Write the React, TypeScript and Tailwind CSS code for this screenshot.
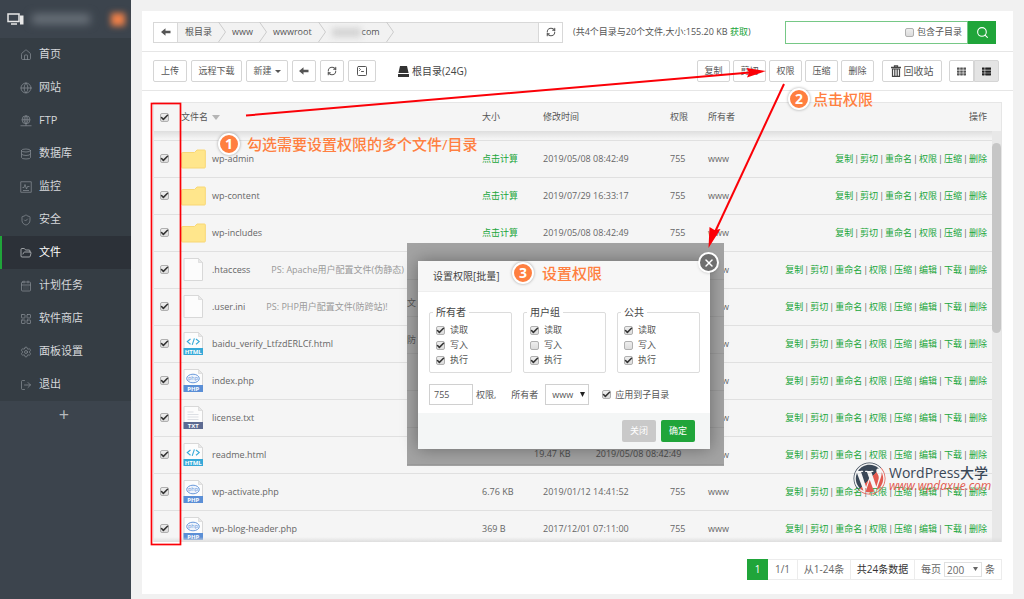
import React from 'react';
import {
    Home, Globe, Database, ShieldCheck, FolderOpen, CalendarDays,
    LayoutGrid, Settings, LogOut, Check, Search, X, RefreshCw, SquareTerminal,
} from 'lucide-react';
import { FaWordpress, FaTh, FaThList } from 'react-icons/fa';

type FileKind = 'folder' | 'blank' | 'html' | 'php' | 'txt';

interface FileRow {
    name: string;
    kind: FileKind;
    note?: string;
    size?: string;
    time?: string;
    mode?: string;
}

interface IconProps {
    size?: number;
    strokeWidth?: number;
    className?: string;
}

const FtpIcon: React.FC<IconProps> = ({ size = 12, strokeWidth = 1.5, className }) => (
    <svg width={size} height={size} viewBox="0 0 24 24" fill="none" stroke="currentColor" strokeWidth={strokeWidth} className={className}>
        <circle cx="12" cy="9.500" r="8" />
        <path d="M4 9.500h16M12 1.500v16M12 1.500c-5 4-5 12 0 16M12 1.500c5 4 5 12 0 16M1 21.500h22M12 17.500v4" />
    </svg>
);

const MonitorIcon: React.FC<IconProps> = ({ size = 12, strokeWidth = 1.5, className }) => (
    <svg width={size} height={size} viewBox="0 0 24 24" fill="none" stroke="currentColor" strokeWidth={strokeWidth} className={className}>
        <path d="M1.500 1.500h21v21h-21zM5 13h3l2-6 3 9 2-5h4M6 19h12" />
    </svg>
);

const ArrowIcon = () => (
    <svg width="10" height="8" viewBox="0 0 10 8" fill="currentColor">
        <path d="M0 4l4.500-3.800v2.600H9.500v2.400H4.500v2.600z" />
    </svg>
);

const TrashIcon = () => (
    <svg width="10" height="12" viewBox="0 0 10 12" fill="none" stroke="#444">
        <path d="M0 2.500h10M3.500 2.500V.8h3v1.700" strokeWidth="1.300" />
        <path d="M1.500 4h7v7.300h-7zM3.800 4.500v6.500M6.200 4.500v6.500" strokeWidth="1.200" />
    </svg>
);

const menu = [
    { label: '首页', icon: Home },
    { label: '网站', icon: Globe },
    { label: 'FTP', icon: FtpIcon },
    { label: '数据库', icon: Database },
    { label: '监控', icon: MonitorIcon },
    { label: '安全', icon: ShieldCheck },
    { label: '文件', icon: FolderOpen },
    { label: '计划任务', icon: CalendarDays },
    { label: '软件商店', icon: LayoutGrid },
    { label: '面板设置', icon: Settings },
    { label: '退出', icon: LogOut },
];

const files: FileRow[] = [
    { name: 'wp-admin', kind: 'folder', time: '2019/05/08 08:42:49', mode: '755' },
    { name: 'wp-content', kind: 'folder', time: '2019/07/29 16:33:17', mode: '755' },
    { name: 'wp-includes', kind: 'folder', time: '2019/05/08 08:42:49', mode: '755' },
    { name: '.htaccess', kind: 'blank', note: 'PS: Apache用户配置文件(伪静态)' },
    { name: '.user.ini', kind: 'blank', note: 'PS: PHP用户配置文件(防跨站)!' },
    { name: 'baidu_verify_LtfzdERLCf.html', kind: 'html' },
    { name: 'index.php', kind: 'php' },
    { name: 'license.txt', kind: 'txt' },
    { name: 'readme.html', kind: 'html' },
    { name: 'wp-activate.php', kind: 'php', size: '6.76 KB', time: '2019/01/12 14:41:52', mode: '755' },
    { name: 'wp-blog-header.php', kind: 'php', size: '369 B', time: '2017/12/01 07:11:00', mode: '755' },
];

const folderActions = ['复制', '剪切', '重命名', '权限', '压缩', '删除'];
const fileActions = ['复制', '剪切', '重命名', '权限', '压缩', '编辑', '下载', '删除'];

const permGroups = [
    { title: '所有者', checks: [true, true, true] },
    { title: '用户组', checks: [true, false, true] },
    { title: '公共', checks: [true, false, true] },
];

const toolButton = 'flex h-[22px] shrink-0 items-center justify-center rounded-[2px] border border-[#d5d5d5] bg-white text-[9px] text-[#555]';

const Tick: React.FC<{ checked?: boolean; label?: string }> = ({ checked = false, label }) => (
    <span className="relative inline-block h-[9px] w-[9px] shrink-0">
        <input
            type="checkbox"
            defaultChecked={checked}
            aria-label={label}
            className="peer absolute inset-0 m-0 h-[9px] w-[9px] appearance-none rounded-[2px] border border-[#b0b0b0] bg-linear-to-b from-[#eee] to-[#dcdcdc]"
        />
        <Check size={9} strokeWidth={4} className="pointer-events-none absolute inset-0 hidden text-[#333] peer-checked:block" />
    </span>
);

const FileIcon: React.FC<{ kind: FileKind }> = ({ kind }) => {
    if (kind === 'folder') {
        return (
            <svg width="25" height="20" viewBox="0 0 25 20">
                <path d="M1.500 3.500h12l2.500-2.500h7.500q.8 0 .8.8v16.400q0 .8-.8.8h-22q-.8 0-.8-.8v-14q0-.7.8-.7z" fill="#ffe68c" stroke="#f8d775" />
            </svg>
        );
    }
    const color = kind === 'html' ? '#36a9d8' : kind === 'php' ? '#5b8fd6' : '#5d6b92';
    return (
        <svg width="21" height="23" viewBox="0 0 21 23" className="ml-[2px]">
            <path d="M1 .5h14.500l4 4v18h-18.500z" fill="#fcfcfc" stroke="#d8d8d8" />
            <path d="M15.500.5v4h4z" fill="#e8e8e8" stroke="#d8d8d8" strokeWidth=".7" />
            {kind === 'html' && <path d="M7.500 7l-3.200 2.600 3.200 2.600M13 7l3.200 2.600L13 12.200M11.400 6.300L9.200 12.900" fill="none" stroke={color} strokeWidth="1.100" />}
            {kind === 'php' && (
                <>
                    <ellipse cx="10" cy="9.500" rx="6.300" ry="4.300" fill="#eef4fd" stroke={color} strokeWidth=".9" />
                    <text x="10" y="11.300" fontSize="5.500" textAnchor="middle" fill={color}>php</text>
                </>
            )}
            {kind === 'txt' && <path d="M4.500 6h6M4.500 8.500h11M4.500 11h11M4.500 13.500h11" stroke="#dcdfe4" />}
            {kind !== 'blank' && (
                <>
                    <rect x=".5" y="16" width="19.500" height="7" fill={color} />
                    <text x="10.200" y="21.700" fontSize="6" fontWeight="700" textAnchor="middle" fill="#fff">{kind.toUpperCase()}</text>
                </>
            )}
        </svg>
    );
};

const Chevron = () => (
    <svg width="8" height="20" viewBox="0 0 8 20" className="shrink-0">
        <path d="M.5 0l7 10L.5 20" fill="none" stroke="#ccc" />
    </svg>
);

const Caret = ({ className }: { className?: string }) => (
    <svg viewBox="0 0 6 5" preserveAspectRatio="none" className={className}>
        <path d="M0 0h6L3 5z" fill="currentColor" />
    </svg>
);

const StepBadge: React.FC<{ step: number }> = ({ step }) => (
    <span className="flex h-[22px] w-[22px] items-center justify-center rounded-full border-2 border-white bg-[#ff7f40] text-sm leading-none font-bold text-white shadow-[0_0_3px_rgba(0,0,0,0.35)]">
        {step}
    </span>
);

const Sidebar = () => (
    <aside className="w-[131px] shrink-0 bg-[#3c444d]">
        <div className="flex h-[38px] items-center overflow-hidden pl-[7px]">
            <svg width="17" height="12" viewBox="0 0 17 12" fill="none" stroke="#e8e8e8">
                <rect x="1" y="1" width="11" height="7.500" strokeWidth="1.500" />
                <path d="M4 11h6" strokeWidth="1.500" />
                <rect x="13.500" y="3" width="2.500" height="8" fill="#e8e8e8" />
            </svg>
            <span className="ml-[8px] h-[10px] w-[58px] bg-[#6a727a] blur-[4px]" />
            <span className="ml-[21px] h-[13px] w-[14px] bg-[#f08048] blur-[3px]" />
        </div>
        <nav className="bg-[#353d44]">
            {menu.map(({ label, icon: Icon }) => {
                const active = label === '文件';
                return (
                    <a
                        key={label}
                        href="#"
                        className={`flex h-[33px] items-center gap-[7px] border-l-2 pl-[18px] text-[11px] ${active ? 'border-[#20a53a] bg-[#2c3138] text-white' : 'border-transparent text-[#d5d8db]'}`}
                    >
                        <Icon size={12} strokeWidth={1.5} className={active ? 'text-[#c5c8cb]' : 'text-[#858c93]'} />
                        {label}
                    </a>
                );
            })}
        </nav>
        <button className="flex h-[26px] w-full items-center justify-center pr-[3px] text-lg leading-none text-[#b5b9bd]">+</button>
    </aside>
);

const PathBar = () => (
    <div className="flex h-[41px] items-center border-b border-[#e6e6e6] pt-[2px] pr-[17px] pl-[11px]">
        <div className="flex h-[21px] w-[410px] items-stretch border border-[#d8d8d8] bg-[#f2f2f2]">
            <button aria-label="返回" className="flex w-[24px] items-center justify-center border-r border-[#d8d8d8] bg-white text-[#555]">
                <ArrowIcon />
            </button>
            <div className="flex flex-1 items-center gap-[6px] pl-[7px] text-[9px] text-[#555]">
                <a href="#">根目录</a>
                <Chevron />
                <a href="#">www</a>
                <Chevron />
                <a href="#">wwwroot</a>
                <Chevron />
                <a href="#" className="flex items-center">
                    <span className="mr-px h-[9px] w-[29px] bg-[#d3d3d3] blur-[3px]" />
                    com
                </a>
                <Chevron />
            </div>
            <button aria-label="刷新" className="flex w-[24px] items-center justify-center border-l border-[#d8d8d8] bg-white text-[#555]">
                <RefreshCw size={10} strokeWidth={2.5} />
            </button>
        </div>
        <p className="ml-[10px] text-[9px] text-[#555]">
            (共4个目录与20个文件,大小:155.20 KB <a href="#" className="text-[#20a53a]">获取</a>)
        </p>
        <div className="ml-auto flex h-[23px] w-[211px]">
            <div className="flex min-w-0 flex-1 items-center border border-[#76c886] bg-white pr-[5px]">
                <input type="text" aria-label="搜索" className="min-w-0 flex-1 outline-none" />
                <label className="flex items-center gap-[3px] text-[9px] text-[#555]">
                    <Tick />
                    包含子目录
                </label>
            </div>
            <button aria-label="搜索文件" className="flex w-[28px] items-center justify-center bg-[#20a53a] text-white">
                <Search size={13} />
            </button>
        </div>
    </div>
);

const Toolbar = () => (
    <div className="flex h-[39px] items-center gap-[4px] border-b border-[#e6e6e6] pr-[14px] pl-[11px]">
        <button className={`${toolButton} w-[34px]`}>上传</button>
        <button className={`${toolButton} w-[51px]`}>远程下载</button>
        <button className={`${toolButton} w-[42px] gap-[3px]`}>
            新建
            <Caret className="h-[3px] w-[6px]" />
        </button>
        <button aria-label="后退" className={`${toolButton} w-[24px]`}><ArrowIcon /></button>
        <button aria-label="刷新列表" className={`${toolButton} w-[24px]`}><RefreshCw size={10} strokeWidth={2.5} /></button>
        <button aria-label="终端" className={`${toolButton} w-[28px]`}><SquareTerminal size={12} strokeWidth={2} /></button>
        <a href="#" className="ml-[18px] flex items-center gap-[3px] text-[10px] text-[#444]">
            <svg width="11" height="11" viewBox="0 0 11 11" fill="#333">
                <path d="M2 0h7l1.600 7H.4zM0 8h11v3H0z" />
            </svg>
            根目录(24G)
        </a>
        <div className="ml-auto flex gap-[3px]">
            {['复制', '剪切', '权限', '压缩', '删除'].map(t => (
                <button key={t} className={`${toolButton} w-[33px]`}>{t}</button>
            ))}
        </div>
        <button className={`${toolButton} ml-[4px] w-[60px] gap-[3px]`}>
            <TrashIcon />
            <span className="text-[10px]">回收站</span>
        </button>
        <div className="ml-[3px] flex">
            <button aria-label="图标视图" className={`${toolButton} w-[25px] rounded-r-none`}><FaTh size={9} /></button>
            <button aria-label="列表视图" className={`${toolButton} w-[25px] rounded-l-none bg-[#e4e4e4]! text-[#222]!`}><FaThList size={9} /></button>
        </div>
    </div>
);

const FileTable = () => (
    <div className="relative mt-[11px] mr-[11px] ml-[11px] h-[440px] overflow-hidden border-x border-t border-[#e6e6e6] bg-[#f5f5f5]">
        <table className="w-full table-fixed border-collapse text-left text-[9px] text-[#666]">
            <colgroup>
                <col className="w-[27px]" />
                <col />
                <col className="w-[61px]" />
                <col className="w-[127px]" />
                <col className="w-[38px]" />
                <col className="w-[60px]" />
                <col className="w-[233px]" />
            </colgroup>
            <thead>
                <tr className="h-[28px] text-[#555] [&>th]:p-0 [&>th]:font-normal">
                    <th><div className="flex pl-[6px]"><Tick checked label="全选" /></div></th>
                    <th>
                        <span className="flex items-center gap-[4px]">
                            文件名
                            <Caret className="h-[5px] w-[8px] text-[#b5b5b5]" />
                        </span>
                    </th>
                    <th>大小</th>
                    <th>修改时间</th>
                    <th>权限</th>
                    <th>所有者</th>
                    <th><div className="pr-[14px] text-right">操作</div></th>
                </tr>
            </thead>
            <tbody>
                <tr className="h-[9px]"><td colSpan={7} className="p-0" /></tr>
                {files.map(file => (
                    <tr key={file.name} className="h-[37px] border-t border-[#e0e0e0] [&>td]:p-0">
                        <td><div className="flex pl-[6px]"><Tick checked label={file.name} /></div></td>
                        <td>
                            <div className="flex items-center whitespace-nowrap">
                                <span className="w-[31px] shrink-0"><FileIcon kind={file.kind} /></span>
                                <a href="#">{file.name}</a>
                                {file.note && <span className="ml-[21px] text-[#999]">{file.note}</span>}
                            </div>
                        </td>
                        <td>{file.kind === 'folder' ? <a href="#" className="text-[#20a53a]">点击计算</a> : file.size}</td>
                        <td>{file.time}</td>
                        <td>{file.mode}</td>
                        <td>www</td>
                        <td>
                            <div className="flex justify-end gap-px pr-[14px] whitespace-nowrap">
                                {(file.kind === 'folder' ? folderActions : fileActions).map((action, i) => (
                                    <React.Fragment key={action}>
                                        {i > 0 && <span>|</span>}
                                        <a href="#" className="text-[#20a53a]">{action}</a>
                                    </React.Fragment>
                                ))}
                            </div>
                        </td>
                    </tr>
                ))}
            </tbody>
        </table>
        <div className="absolute inset-x-0 top-[28px] h-[8px] bg-linear-to-b from-[#dedede] to-transparent" />
        <div className="absolute top-[28px] right-0 bottom-0 w-[9px] bg-[#e8e8e8] pt-[12px]">
            <div className="h-[190px] rounded-full bg-[#c6c6c6]" />
        </div>
        <div className="absolute inset-x-0 bottom-0 h-[5px] bg-linear-to-t from-[#dedede] to-transparent" />
    </div>
);

const Pagination = () => (
    <div className="mt-[17px] mr-[11px] mb-[14px] flex justify-end text-[10px] text-[#666]">
        <div className="flex h-[21px] items-stretch border border-[#ececec] [&>*]:flex [&>*]:items-center">
            <span className="-my-px -ml-px w-[21px] justify-center bg-[#20a53a] text-white">1</span>
            <span className="w-[30px] justify-center border-r border-[#ececec]">1/1</span>
            <span className="w-[53px] justify-center border-r border-[#ececec]">从1-24条</span>
            <span className="w-[64px] justify-center border-r border-[#ececec] text-[#333]">共24条数据</span>
            <label className="gap-[3px] px-[6px]">
                每页
                <span className="relative flex">
                    <select className="h-[15px] w-[38px] appearance-none border border-[#e0e0e0] bg-white pl-[2px] text-[10px] leading-none" defaultValue="200">
                        <option>200</option>
                    </select>
                    <Caret className="pointer-events-none absolute top-[5px] right-[4px] h-[4px] w-[5px]" />
                </span>
                条
            </label>
        </div>
    </div>
);

const PermissionDialog = () => (
    <div className="absolute top-[243px] left-[407px] w-[317px] bg-[#a3a3a3] bg-[repeating-linear-gradient(to_bottom,transparent_0,transparent_36px,#999_36px,#999_37px)] text-[9px] text-[#555]">
        <div className="flex h-[206px] pt-[18px] pr-[14px]">
            <div className="w-[11px] shrink-0 overflow-hidden pt-[36px] leading-[12px]">
                <p>文</p>
                <p className="mt-[25px]">防</p>
            </div>
            <section role="dialog" aria-label="设置权限" className="relative flex flex-1 flex-col bg-white shadow-[0_0_16px_rgba(0,0,0,0.35)]">
                <header className="flex h-[31px] items-center border-b border-[#eee] bg-[#f7f7f7] pl-[15px] text-[10px] text-[#444]">
                    设置权限[批量]
                </header>
                <button aria-label="关闭窗口" className="absolute -top-[9px] -right-[9px] flex h-[21px] w-[21px] items-center justify-center rounded-full border-2 border-white bg-[#6f6f6f] text-white shadow-sm">
                    <X size={12} strokeWidth={3} />
                </button>
                <div className="flex gap-[11px] px-[11px] pt-[14px] pr-[10px]">
                    {permGroups.map(group => (
                        <fieldset key={group.title} className="h-[67px] min-w-0 flex-1 rounded-[2px] border border-[#dcdcdc] px-[6px]">
                            <legend className="-ml-[3px] px-[3px] text-[10px] leading-[12px] text-[#444]">{group.title}</legend>
                            <div className="flex flex-col gap-[3px] pt-[6px]">
                                {['读取', '写入', '执行'].map((name, i) => (
                                    <label key={name} className="flex h-[12px] items-center gap-[5px]">
                                        <Tick checked={group.checks[i]} />
                                        {name}
                                    </label>
                                ))}
                            </div>
                        </fieldset>
                    ))}
                </div>
                <div className="mt-[11px] flex h-[21px] items-center px-[11px]">
                    <input id="mode" type="text" defaultValue="755" className="h-[21px] w-[44px] border border-[#d0d0d0] pl-[4px] text-[9px]" />
                    <label htmlFor="mode" className="ml-[3px]">权限,</label>
                    <label htmlFor="owner" className="ml-[15px]">所有者</label>
                    <span className="relative ml-[7px] flex">
                        <select id="owner" className="h-[21px] w-[44px] appearance-none border border-[#d0d0d0] bg-white pl-[6px] text-[9px]" defaultValue="www">
                            <option>www</option>
                        </select>
                        <Caret className="pointer-events-none absolute top-[8px] right-[4px] h-[5px] w-[5px] text-[#222]" />
                    </span>
                    <label className="ml-[13px] flex items-center gap-[4px]">
                        <Tick checked />
                        应用到子目录
                    </label>
                </div>
                <footer className="mt-auto flex h-[36px] items-center justify-end gap-[5px] bg-[#f4f6f6] pr-[15px] text-[9px] text-white">
                    <button className="h-[22px] w-[34px] rounded-[2px] bg-[#c9c9c9]">关闭</button>
                    <button className="h-[22px] w-[34px] rounded-[2px] bg-[#20a53a]">确定</button>
                </footer>
            </section>
        </div>
        <div className="relative flex h-[17px] gap-[25px] pl-[127px] leading-[10px] text-[#444]">
            <span>19.47 KB</span>
            <span>2019/05/08 08:42:49</span>
        </div>
    </div>
);

const Annotations = () => (
    <div className="pointer-events-none absolute inset-0 text-[15px] leading-none font-medium text-[#ff7f40]">
        <svg width="1024" height="599" viewBox="0 0 1024 599" className="absolute top-0 left-0">
            <rect x="151.500" y="103.500" width="29" height="441" fill="none" stroke="#fb0007" strokeWidth="1.700" />
            <path d="M246 115.500L750 72.500" stroke="#fb0007" strokeWidth="2" />
            <path d="M766 71L747 77.500L749 72.500L746.500 68z" fill="#fb0007" />
            <path d="M784 84L715 232" stroke="#fb0007" strokeWidth="2" />
            <path d="M708.500 248L709.500 227L714.500 230L720.500 229z" fill="#fb0007" />
        </svg>
        <div className="absolute top-[133px] left-[218px] flex items-center gap-[7px]"><StepBadge step={1} />勾选需要设置权限的多个文件/目录</div>
        <div className="absolute top-[88px] left-[788px] flex items-center gap-[3px]"><StepBadge step={2} />点击权限</div>
        <div className="absolute top-[262px] left-[512px] flex items-center gap-[8px]"><StepBadge step={3} />设置权限</div>
        <div className="absolute top-[462px] left-[853px] flex items-center gap-[3px]">
            <svg width="33" height="33" viewBox="0 0 33 33">
                <defs>
                    <linearGradient id="wpTone" gradientUnits="userSpaceOnUse" x1="0" y1="0" x2="512" y2="512">
                        <stop offset=".5" stopColor="#3a4757" />
                        <stop offset=".5" stopColor="#e25a50" />
                    </linearGradient>
                </defs>
                <FaWordpress size={33} fill="url(#wpTone)" />
            </svg>
            <div>
                <p className="text-sm leading-[14px] text-[#3a4757]">WordPress大学</p>
                <p className="text-xs leading-[12px] font-normal text-[#e25a50] italic">www.wpdaxue.com</p>
            </div>
        </div>
    </div>
);

const App: React.FC = () => (
    <div className="relative flex min-h-screen bg-[#f1f1f1] font-['Open_Sans','Noto_Sans_CJK_SC',sans-serif]">
        <Sidebar />
        <main className="mt-[11px] mr-[11px] ml-[11px] min-w-0 flex-1 self-start bg-white">
            <PathBar />
            <Toolbar />
            <FileTable />
            <Pagination />
        </main>
        <PermissionDialog />
        <Annotations />
    </div>
);

export default App;
